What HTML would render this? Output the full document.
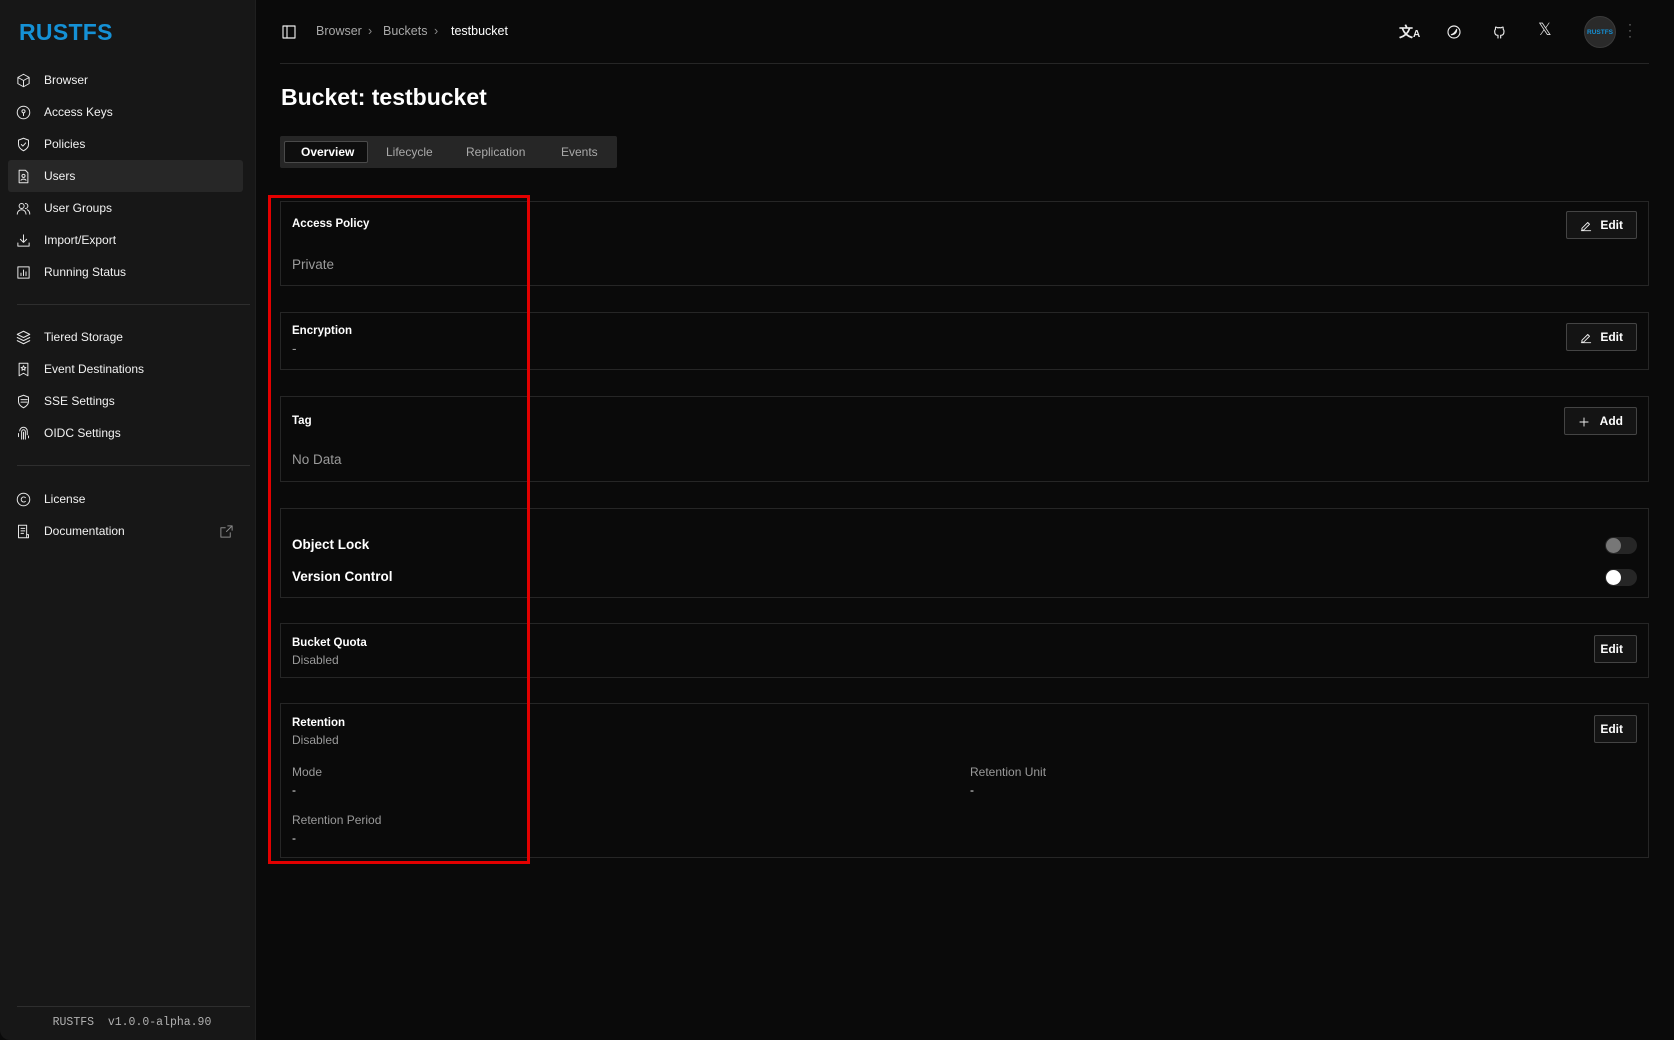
<!DOCTYPE html>
<html><head><meta charset="utf-8">
<style>
*{box-sizing:border-box;margin:0;padding:0}
body{width:1674px;height:1040px;background:#0a0a0a;font-family:"Liberation Sans",sans-serif;color:#fff;position:relative;overflow:hidden}
.abs{position:absolute}
#side{position:absolute;left:0;top:0;width:256px;height:1040px;background:#171717;border-right:1px solid #1f1f1f;border-radius:0 0 0 10px}
.logo{left:19px;top:19px;font-size:23px;font-weight:bold;color:#1591d6;letter-spacing:0.3px}
.nav{position:absolute;left:8px;width:235px;height:32px;display:flex;align-items:center;font-size:12px;color:#f2f2f2}
.nav svg{position:absolute;left:8px;width:15px;height:15px;fill:none;stroke:#e6e6e6;stroke-width:1.6;stroke-linecap:round;stroke-linejoin:round}
.nav span{position:absolute;left:36px}
.nav.act{background:#272727;border-radius:3px}
.div{position:absolute;left:17px;width:233px;height:1px;background:#2e2e2e}
.foot{left:4px;width:256px;top:1016px;text-align:center;font-family:"Liberation Mono",monospace;font-size:11.5px;color:#b0b0b0}
.crumb{top:24px;font-size:12.5px;color:#a8a8a8}
.card{position:absolute;left:280px;width:1369px;border:1px solid #262626;background:#0a0a0a}
.t{position:absolute;left:292px;font-size:11.5px;font-weight:bold;color:#fff}
.g{position:absolute;left:292px;font-size:13.5px;color:#9a9a9a}
.s{position:absolute;font-size:12px;color:#9a9a9a}
.btn{position:absolute;height:28px;border:1px solid #444;background:#141414;border-radius:2px;font-size:12px;font-weight:bold;color:#fff;display:flex;align-items:center;justify-content:flex-end;padding-right:13px}
.btn svg{position:absolute;left:12px;top:7px;width:14px;height:14px;fill:none;stroke:#eee;stroke-width:1.6;stroke-linecap:round;stroke-linejoin:round}
.tog{position:absolute;left:1605px;width:32px;height:17px;border-radius:9px;background:#262626}
.tog i{position:absolute;left:1px;top:1px;width:15px;height:15px;border-radius:50%}
.ic{position:absolute;top:24px;width:16px;height:16px;fill:none;stroke:#eee;stroke-width:1.7;stroke-linecap:round;stroke-linejoin:round}
</style></head><body>
<div id="side">
<div class="abs logo">RUSTFS</div>
<div class="nav" style="top:64px"><svg viewBox="0 0 24 24"><path d="M12 2l9 5v10l-9 5-9-5V7z M3 7l9 5 9-5 M12 12v10"/></svg><span>Browser</span></div>
<div class="nav" style="top:96px"><svg viewBox="0 0 24 24"><circle cx="12" cy="12" r="10"/><circle cx="12" cy="10" r="2.5"/><path d="M12 12.5V17"/></svg><span>Access Keys</span></div>
<div class="nav" style="top:128px"><svg viewBox="0 0 24 24"><path d="M12 2l8 3v7c0 5-4 8-8 10-4-2-8-5-8-10V5z M8.5 12l2.5 2.5 4.5-5"/></svg><span>Policies</span></div>
<div class="nav act" style="top:160px"><svg viewBox="0 0 24 24"><path d="M5 2h10l4 4v16H5z"/><circle cx="12" cy="11" r="2.5"/><path d="M8 18c1-2.5 7-2.5 8 0"/></svg><span>Users</span></div>
<div class="nav" style="top:192px"><svg viewBox="0 0 24 24"><circle cx="9" cy="8" r="4"/><path d="M2 21c0-4 3-7 7-7s7 3 7 7 M15 4a4 4 0 010 8 M18 14c2 1 4 3 4 7"/></svg><span>User Groups</span></div>
<div class="nav" style="top:224px"><svg viewBox="0 0 24 24"><path d="M12 3v11 M7 10l5 5 5-5 M3 16v5h18v-5"/></svg><span>Import/Export</span></div>
<div class="nav" style="top:256px"><svg viewBox="0 0 24 24"><rect x="3" y="3" width="18" height="18"/><path d="M8 17v-4 M12 17V8 M16 17v-6"/></svg><span>Running Status</span></div>
<div class="div" style="top:304px"></div>
<div class="nav" style="top:321px"><svg viewBox="0 0 24 24"><path d="M12 2l10 5-10 5L2 7z M2 12l10 5 10-5 M2 17l10 5 10-5"/></svg><span>Tiered Storage</span></div>
<div class="nav" style="top:353px"><svg viewBox="0 0 24 24"><path d="M5 2h14v20l-7-4-7 4z M12 6l1.2 2.5 2.6.3-2 1.8.6 2.6-2.4-1.4-2.4 1.4.6-2.6-2-1.8 2.6-.3z"/></svg><span>Event Destinations</span></div>
<div class="nav" style="top:385px"><svg viewBox="0 0 24 24"><path d="M12 2l8 3v7c0 5-4 8-8 10-4-2-8-5-8-10V5z M8 9h10 M8 13h10"/></svg><span>SSE Settings</span></div>
<div class="nav" style="top:417px"><svg viewBox="0 0 24 24"><path d="M6 8a6 6 0 0112 0v6 M9 21V9a3 3 0 016 0v12 M12 10v11 M4 12v5 M20 16v3"/></svg><span>OIDC Settings</span></div>
<div class="div" style="top:465px"></div>
<div class="nav" style="top:483px"><svg viewBox="0 0 24 24"><circle cx="12" cy="12" r="10"/><path d="M15 9a4 4 0 100 6"/></svg><span>License</span></div>
<div class="nav" style="top:515px"><svg viewBox="0 0 24 24"><path d="M4 2h13v20H4z M8 7h6 M8 11h6 M8 15h4 M17 17h3v5h-3"/></svg><span>Documentation</span><svg viewBox="0 0 24 24" style="left:211px;stroke:#888"><path d="M14 3h7v7 M21 3l-9 9 M18 14v7H3V6h7"/></svg></div>
<div class="abs" style="left:17px;top:1006px;width:233px;height:1px;background:#2e2e2e"></div>
<div class="abs foot">RUSTFS&nbsp; v1.0.0-alpha.90</div>
</div>

<svg class="ic" style="left:281px" viewBox="0 0 24 24"><rect x="3" y="3" width="18" height="18"/><path d="M9 3v18"/></svg>
<div class="abs crumb" style="left:316px">Browser</div>
<div class="abs crumb" style="left:368px;color:#888">›</div>
<div class="abs crumb" style="left:383px">Buckets</div>
<div class="abs crumb" style="left:434px;color:#888">›</div>
<div class="abs crumb" style="left:451px;color:#fff">testbucket</div>

<div class="abs" style="left:1399px;top:22px;font-size:14px;font-weight:bold;color:#eee">文<span style="font-size:10px">A</span></div>
<svg class="ic" style="left:1446px" viewBox="0 0 24 24"><circle cx="12" cy="12" r="9"/><path d="M16 8c0 5-3 8-8 8 3-1 6-4 8-8z" fill="#eee"/></svg>
<svg class="ic" style="left:1492px" viewBox="0 0 24 24"><path d="M9 21v-4c-3 0-5-2-5-6 0-1.5.5-2.5 1.3-3.4-.2-1-.2-2 .2-3 1.2 0 2.2.6 3 1.2a9 9 0 015 0c.8-.6 1.8-1.2 3-1.2.4 1 .4 2 .2 3 .8.9 1.3 1.9 1.3 3.4 0 4-2 6-5 6v4"/></svg>
<div class="abs" style="left:1538px;top:20px;font-size:17px;color:#ddd">𝕏</div>
<div class="abs" style="left:1584px;top:16px;width:32px;height:32px;border-radius:50%;background:#2a2a2a;border:1px solid #3a3a3a;color:#1591d6;font-size:6.5px;font-weight:bold;display:flex;align-items:center;justify-content:center">RUSTFS</div>
<div class="abs" style="left:1628px;top:21px;color:#888;font-size:12px;line-height:6px">·<br>·<br>·</div>
<div class="abs" style="left:280px;top:63px;width:1369px;height:1px;background:#262626"></div>

<div class="abs" style="left:281px;top:84px;font-size:23px;font-weight:bold">Bucket: testbucket</div>
<div class="abs" style="left:280px;top:136px;width:337px;height:32px;background:#262626;border-radius:2px"></div>
<div class="abs" style="left:284px;top:141px;width:84px;height:22px;background:#0e0e0e;border:1px solid #4a4a4a;border-radius:2px"></div>
<div class="abs" style="left:301px;top:145px;font-size:12px;font-weight:bold">Overview</div>
<div class="abs" style="left:386px;top:145px;font-size:12px;color:#aaa">Lifecycle</div>
<div class="abs" style="left:466px;top:145px;font-size:12px;color:#aaa">Replication</div>
<div class="abs" style="left:561px;top:145px;font-size:12px;color:#aaa">Events</div>

<div class="card" style="top:201px;height:85px"></div>
<div class="t" style="top:218px">Access Policy</div>
<div class="g" style="top:257px">Private</div>
<div class="btn" style="left:1566px;top:211px;width:71px"><svg viewBox="0 0 24 24"><path d="M4 20h16 M5 16L15 6l3 3L8 19H5z"/></svg>Edit</div>

<div class="card" style="top:312px;height:58px"></div>
<div class="t" style="top:325px">Encryption</div>
<div class="g" style="top:341px">-</div>
<div class="btn" style="left:1566px;top:323px;width:71px"><svg viewBox="0 0 24 24"><path d="M4 20h16 M5 16L15 6l3 3L8 19H5z"/></svg>Edit</div>

<div class="card" style="top:396px;height:86px"></div>
<div class="t" style="top:415px">Tag</div>
<div class="g" style="top:452px">No Data</div>
<div class="btn" style="left:1564px;top:407px;width:73px"><svg viewBox="0 0 24 24"><path d="M12 5v14 M5 12h14"/></svg>Add</div>

<div class="card" style="top:508px;height:90px"></div>
<div class="t" style="top:537px;font-size:13.5px">Object Lock</div>
<div class="t" style="top:569px;font-size:13.5px">Version Control</div>
<div class="tog" style="top:537px"><i style="background:#777"></i></div>
<div class="tog" style="top:569px"><i style="background:#fff"></i></div>

<div class="card" style="top:623px;height:55px"></div>
<div class="t" style="top:637px">Bucket Quota</div>
<div class="s" style="left:292px;top:653px">Disabled</div>
<div class="btn" style="left:1594px;top:635px;width:43px">Edit</div>

<div class="card" style="top:703px;height:155px"></div>
<div class="t" style="top:717px">Retention</div>
<div class="s" style="left:292px;top:733px">Disabled</div>
<div class="s" style="left:292px;top:765px">Mode</div>
<div class="s" style="left:292px;top:783px;color:#eee">-</div>
<div class="s" style="left:970px;top:765px">Retention Unit</div>
<div class="s" style="left:970px;top:783px;color:#eee">-</div>
<div class="s" style="left:292px;top:813px">Retention Period</div>
<div class="s" style="left:292px;top:831px;color:#eee">-</div>
<div class="btn" style="left:1594px;top:715px;width:43px">Edit</div>

<div class="abs" style="left:268px;top:195px;width:262px;height:669px;border:3px solid #e30000"></div>
</body></html>
